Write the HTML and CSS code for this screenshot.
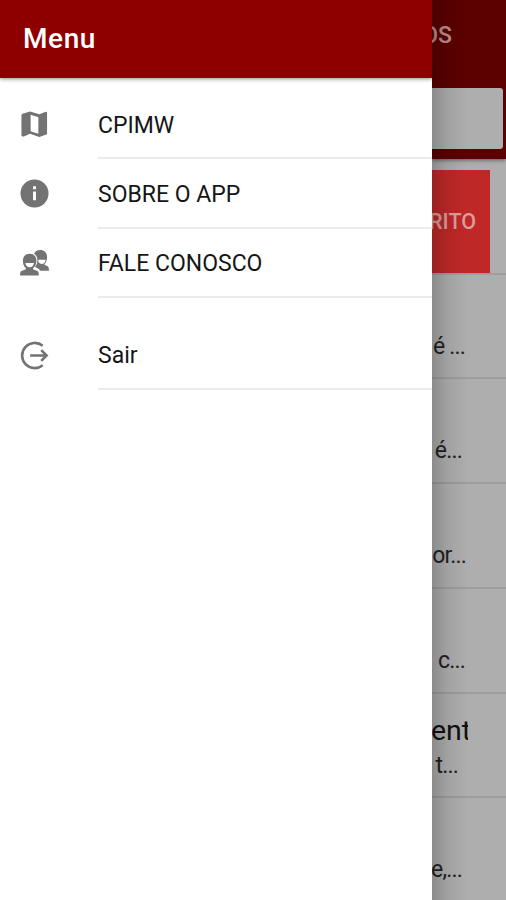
FILE: index.html
```html
<!DOCTYPE html>
<html lang="pt-BR">
<head>
<meta charset="utf-8">
<title>Menu</title>
<link rel="stylesheet" href="styles.css">
</head>
<body>
<div class="app">
  <aside class="drawer">
    <header class="drawer-header"><h1>Menu</h1></header>
    <nav class="menu">
      <a class="item">
        <svg class="icon" viewBox="0 0 30 30"><path fill-rule="evenodd" d="M2.500 4 10.500 1.500 20 4.500l6-2.500q2-.5 2 1V25L20 28l-9.500-3.500-6.500 2.800Q1.500 28 1.500 26V5ZM11 5v17l8 2.500V7.500Z"/></svg>
        <span class="label">CPIMW</span>
      </a>
      <a class="item">
        <svg class="icon" viewBox="0 0 30 30"><path fill-rule="evenodd" d="M15 .5a14.500 14.500 0 1 0 0 29 14.500 14.500 0 0 0 0-29ZM13.500 7.500h3v3h-3ZM13.500 13h3v9h-3Z"/></svg>
        <span class="label">SOBRE O APP</span>
      </a>
      <a class="item">
        <svg class="icon" viewBox="0 0 30 30"><path d="M14.500 5C16 2 18 1 21 1c4.500 0 7 3 7 7.500 0 3-1 5.500-3 7.500l4 2q1 1 1 4.500h-9c-1-2-3-3-5.500-4 2-2 2.500-4 2.500-7 0-3-1-5-3.500-6.500Z"/><path class="cut" d="M19 11h7.500c-.5 3-2 4.500-4 4.500-1.500 0-3-1-3.500-2.500Z"/><path d="M10 5c4.500 0 7 3 7 7s-1 6-3.500 8v1l5 2q1 1 1 4.500H0Q0 24 1 23l5-2v-1C4 18 3 16 3 12s2.500-7 7-7Z"/><path class="cut" d="M5.500 14.500h9c-.5 3-2.300 4.300-4.500 4.300s-4-1.300-4.500-4.300Z"/></svg>
        <span class="label">FALE CONOSCO</span>
      </a>
      <a class="item exit">
        <svg class="icon line" viewBox="0 0 30 30"><path d="M23.500 5A13 13 0 1 0 23.500 25M10.500 15H27M22 9.500 27.500 15 22 20.500"/></svg>
        <span class="label">Sair</span>
      </a>
    </nav>
  </aside>
  <main class="page">
    <header class="page-header">
      <div class="page-title">OS</div>
      <div class="search"></div>
    </header>
    <ul class="list">
      <li class="row first"><div class="action">RITO</div></li>
      <li class="row"><p class="text r1">é ...</p></li>
      <li class="row"><p class="text r2">é...</p></li>
      <li class="row"><p class="text r3">or...</p></li>
      <li class="row"><p class="text r4">c...</p></li>
      <li class="row"><h2 class="title"><span>ent</span></h2><p class="text r5">t...</p></li>
      <li class="row"><p class="text r6">e,...</p></li>
    </ul>
  </main>
</div>
</body>
</html>
```
FILE: styles.css
```css
* { box-sizing: border-box; }
body { margin: 0; font-family: Roboto, sans-serif; }
h1, h2, p, ul { margin: 0; padding: 0; font-weight: 400; }
.app { display: grid; grid-template-columns: 432px 1fr; width: 506px; height: 900px; overflow: hidden; background: #aeaeae; }
.drawer { background: #fff; }
.drawer-header { height: 78px; padding-left: 23px; display: flex; align-items: center; background: #8e0000; color: #fff; box-shadow: 0 1px 4px rgba(0,0,0,.45); clip-path: inset(0 0 -8px 0); }
.drawer-header h1 { font-size: 28px; font-weight: 500; line-height: 32px; letter-spacing: .6px; }
.menu { padding-top: 12px; }
.item { display: grid; grid-template-columns: 78px 1fr; height: 69.300px; padding-left: 20px; }
.icon { width: 29px; height: 29px; margin-top: 20px; fill: #737373; }
.icon .cut { fill: #fff; }
.icon.line { fill: none; stroke: #737373; stroke-width: 2.700; }
.label { padding-top: 21.500px; border-bottom: 2px solid #ebebeb; font-size: 23px; line-height: 28px; color: #151515; white-space: nowrap; }
.exit { margin-top: 23px; }
.page { position: relative; overflow: hidden; }
.page::after { content: ""; position: absolute; inset: 0; background: linear-gradient(90deg, rgba(0,0,0,.2), rgba(0,0,0,.07) 16px, transparent 36px); pointer-events: none; }
.page-header { height: 159px; background: #5c0000; box-shadow: 0 1px 4px rgba(0,0,0,.5); }
.page-title { display: flex; justify-content: flex-end; height: 88px; padding: 21px 54px 0 0; font-size: 23px; font-weight: 500; line-height: 30px; color: #bd8e8e; }
.search { height: 61px; margin-right: 3px; background: #aeaeae; border-radius: 0 3px 3px 0; }
.list { list-style: none; }
.row { height: 104.800px; border-bottom: 2px solid #9e9e9e; overflow: hidden; }
.row.first { height: 115.500px; padding-top: 11px; }
.action { display: flex; align-items: center; justify-content: flex-end; width: 58px; height: 103px; padding-right: 14px; background: #c02828; color: #dc9d9d; font-size: 21.500px; font-weight: 500; }
.text { display: flex; justify-content: flex-end; margin-top: 58px; font-size: 23px; line-height: 28px; letter-spacing: -.8px; color: #222; white-space: pre; }
.r1 { padding-right: 41px; }
.r2 { padding-right: 44px; }
.r3 { padding-right: 40px; }
.r4 { padding-right: 41px; }
.r5 { padding-right: 48px; }
.r6 { padding-right: 44px; }
.title { width: 36px; height: 34px; margin-top: 20px; overflow: hidden; font-size: 28.500px; line-height: 34px; color: #111; }
.title span { margin-left: -1px; }
.title + .text { margin-top: 4px; }
```
